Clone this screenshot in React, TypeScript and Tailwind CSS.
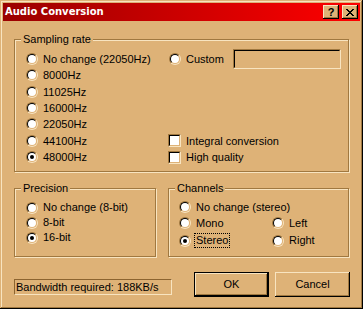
import React from "react";

const FACE = "bg-[#deb277]";

const Radio = ({ checked = false }: { checked?: boolean }) => (
  <span className="w-[12px] h-[12px] shrink-0 rounded-full border border-t-[#a07840] border-l-[#a07840] border-b-[#f8e4c0] border-r-[#f8e4c0]">
    <span className="w-full h-full rounded-full border border-t-black border-l-black border-b-[#deb277] border-r-[#deb277] bg-white flex items-center justify-center">
      {checked && <span className="w-[4px] h-[4px] rounded-full bg-black" />}
    </span>
  </span>
);

const Check = () => (
  <span className="w-[13px] h-[13px] shrink-0 border border-t-[#a07840] border-l-[#a07840] border-b-[#f8e4c0] border-r-[#f8e4c0]">
    <span className="block w-full h-full border border-t-black border-l-black border-b-[#deb277] border-r-[#deb277] bg-white" />
  </span>
);

const RadioRow = ({ label, checked, className = "" }: { label: React.ReactNode; checked?: boolean; className?: string }) => (
  <div className={`flex items-center gap-[5px] ${className}`}>
    <Radio checked={checked} />
    <span className="whitespace-nowrap">{label}</span>
  </div>
);

const Group = ({ title, className, children }: { title: string; className: string; children: React.ReactNode }) => (
  <div className={`relative border border-[#a07840] shadow-[inset_1px_1px_#f8e4c0,1px_1px_#f8e4c0] ${className}`}>
    <span className={`absolute top-[-7px] left-[6px] px-[2px] leading-[13px] ${FACE}`}>{title}</span>
    {children}
  </div>
);

const CloseGlyph = () => {
  const rows = ["XX....XX", ".XX..XX.", "..XXXX..", "...XX...", "..XXXX..", ".XX..XX.", "XX....XX"];
  return (
    <svg width="8" height="7" viewBox="0 0 8 7" shapeRendering="crispEdges">
      {rows.map((r, y) =>
        r.split("").map((c, x) => (c === "X" ? <rect key={`${x}-${y}`} x={x} y={y} width="1" height="1" fill="#000" /> : null))
      )}
    </svg>
  );
};

const TitleButton = ({ children }: { children: React.ReactNode }) => (
  <div className={`w-[16px] h-[14px] flex items-center justify-center ${FACE} shadow-[inset_-1px_-1px_#000,inset_1px_1px_#f8e4c0,inset_-2px_-2px_#a07840]`}>
    {children}
  </div>
);

const Button = ({ label, primary = false }: { label: string; primary?: boolean }) => (
  <div
    className={`w-[75px] h-[25px] flex items-center justify-center ${FACE} ${
      primary
        ? "border border-black shadow-[inset_-1px_-1px_#000,inset_1px_1px_#f8e4c0,inset_-2px_-2px_#a07840]"
        : "shadow-[inset_-1px_-1px_#000,inset_1px_1px_#f8e4c0,inset_-2px_-2px_#a07840]"
    }`}
  >
    {label}
  </div>
);

export default function App() {
  const rates = ["No change (22050Hz)", "8000Hz", "11025Hz", "16000Hz", "22050Hz", "44100Hz", "48000Hz"];

  return (
    <div
      className={`w-[363px] h-[309px] p-[3px] flex flex-col ${FACE} text-black text-[11px] font-['Liberation_Sans',Arial,sans-serif] shadow-[inset_-1px_-1px_#000,inset_1px_1px_#deb277,inset_-2px_-2px_#a07840,inset_2px_2px_#f8e4c0]`}
    >
      <div className="h-[18px] flex items-center pl-[2px] pr-[2px] bg-[linear-gradient(to_right,#9a0000,#ff0000)]">
        <span className="text-white font-bold text-[10px] leading-none font-['DejaVu_Sans',sans-serif]">Audio Conversion</span>
        <div className="ml-auto flex gap-[1px]">
          <TitleButton>
            <span className="font-bold text-[11px] leading-none">?</span>
          </TitleButton>
          <div className="w-[1px]" />
          <TitleButton>
            <CloseGlyph />
          </TitleButton>
        </div>
      </div>

      <div className="pl-[11px] pt-[18px] flex flex-col">
        <Group title="Sampling rate" className="w-[335px] h-[133px]">
          <div className="grid grid-cols-[143px_1fr] auto-rows-[16.33px] pl-[11px] pt-[11px]">
            {rates.map((r, i) => (
              <RadioRow key={r} label={r} checked={i === 6} className="col-start-1" />
            ))}
            <div className="col-start-2 row-start-1 flex items-center">
              <RadioRow label={<span className="inline-block w-[47px]">Custom</span>} />
              <div className="w-[108px] h-[20px] shrink-0 border border-t-[#a07840] border-l-[#a07840] border-b-[#f8e4c0] border-r-[#f8e4c0]">
                <div className="w-full h-full border border-t-black border-l-black border-b-[#deb277] border-r-[#deb277]" />
              </div>
            </div>
            <div className="col-start-2 row-start-6 flex items-center gap-[5px] -ml-[1px]">
              <Check />
              <span>Integral conversion</span>
            </div>
            <div className="col-start-2 row-start-7 flex items-center gap-[5px] -ml-[1px]">
              <Check />
              <span>High quality</span>
            </div>
          </div>
        </Group>

        <div className="flex mt-[16px]">
          <Group title="Precision" className="w-[142px] h-[69px]">
            <div className="flex flex-col pl-[11px] pt-[11px]">
              <RadioRow label="No change (8-bit)" className="h-[15px]" />
              <RadioRow label="8-bit" className="h-[15px]" />
              <RadioRow label="16-bit" checked className="h-[15px]" />
            </div>
          </Group>
          <Group title="Channels" className="w-[181px] h-[69px] ml-[12px]">
            <div className="grid grid-cols-[93px_1fr] pl-[10px] pt-[10px]">
              <RadioRow label="No change (stereo)" className="col-span-2 h-[16px]" />
              <RadioRow label="Mono" className="h-[16px]" />
              <RadioRow label="Left" className="h-[16px]" />
              <RadioRow
                label={<span className="-ml-[2px] px-[1px] border border-dotted border-black leading-[13px] inline-block">Stereo</span>}
                checked
                className="h-[18px] pt-[1px]"
              />
              <RadioRow label="Right" className="h-[18px] pt-[1px]" />
            </div>
          </Group>
        </div>

        <div className="flex items-start mt-[15px]">
          <div className="w-[158px] h-[16px] mt-[7px] pl-[1px] flex items-center border border-t-[#8c6430] border-l-[#8c6430] border-b-[#f8e4c0] border-r-[#f8e4c0] whitespace-nowrap">
            Bandwidth required: 188KB/s
          </div>
          <div className="ml-[22px]">
            <Button label="OK" primary />
          </div>
          <div className="ml-[6px]">
            <Button label="Cancel" />
          </div>
        </div>
      </div>
    </div>
  );
}
